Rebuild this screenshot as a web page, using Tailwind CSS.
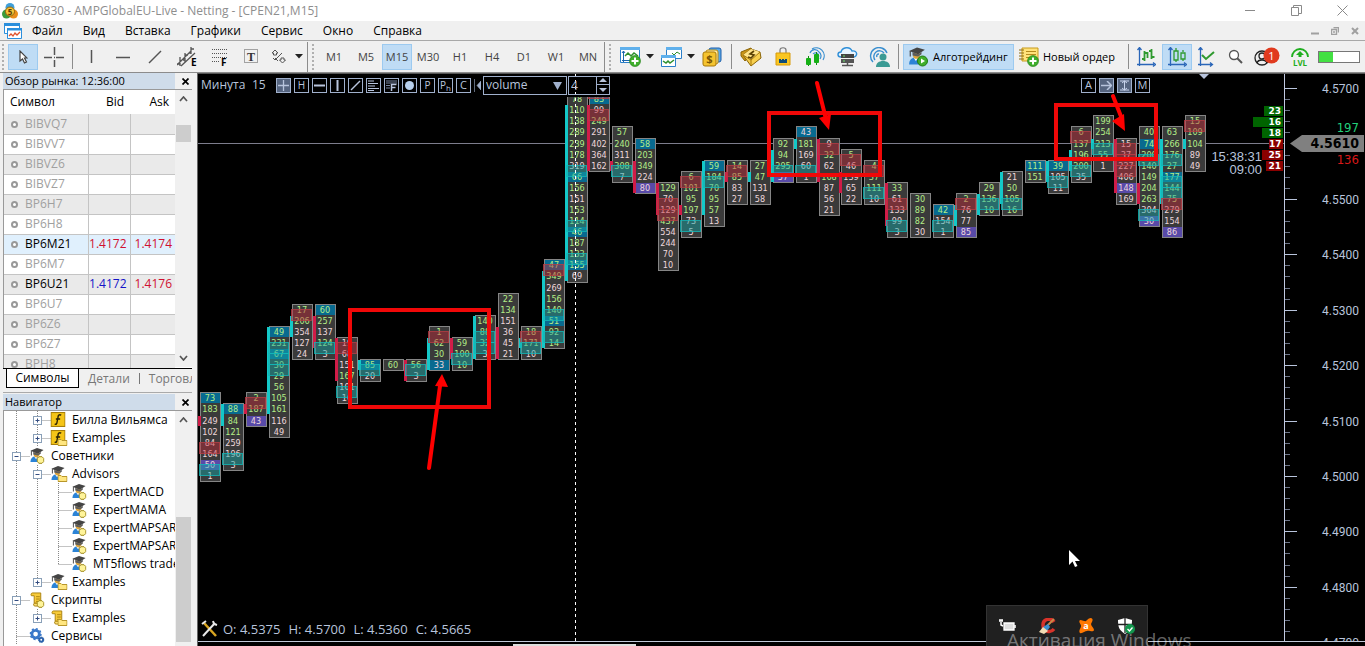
<!DOCTYPE html>
<html lang="ru">
<head>
    <meta charset="UTF-8">
    <meta name="viewport" content="width=device-width, initial-scale=1.0">
    <title>670830 - AMPGlobalEU-Live - Netting - [CPEN21,M15]</title>
    <script src="https://cdn.jsdelivr.net/npm/@tailwindcss/browser@4"></script>
</head>
<body class="h-screen flex flex-col overflow-hidden bg-[#f0f0f0] text-black text-[12px] leading-4 font-['Open_Sans','Noto_Sans',sans-serif]">
    <!-- Shared icons -->
    <svg class="hidden">
        <symbol id="advisor" viewBox="0 0 16 16">
            <path d="M1 15c0-4 2-6 5-6s6 2 6 6z" fill="#2b83d6" />
            <path d="M5 9l2 3 2-3z" fill="#fff" />
            <circle cx="7.500" cy="7" r="3" fill="#d9a23c" />
            <path d="M1 3l7-3 7 2-6 4z" fill="#444" />
            <path d="M4 4v3l5 1 3-2V4L9 6z" fill="#5d5d5d" />
            <path d="M2 3v5" stroke="#444" />
        </symbol>
        <symbol id="folder" viewBox="0 0 10 8">
            <path d="M.5 1.500h3l1 1h5v5h-9z" fill="#ffe680" stroke="#b8962a" />
        </symbol>
        <symbol id="gem" viewBox="0 0 8 8">
            <path d="M2.500 .7h3l1.800 1.800v3L5.500 7.300h-3L.7 5.500v-3z" fill="#fff49a" stroke="#a08a1c" />
        </symbol>
        <symbol id="fx" viewBox="0 0 14 14">
            <rect x=".5" y=".5" width="13" height="13" fill="#f5c518" stroke="#a87f0a" />
            <path d="M10 3c-2-1-3 0-3 2L6 10c0 1-1 2-2 1M5 6.500h4" fill="none" stroke="#2a2205" stroke-width="1.300" />
        </symbol>
        <symbol id="script" viewBox="0 0 16 16">
            <path d="M3 1h9v11H5V4H2c-1-1 0-3 1-3z" fill="#f7cb3a" stroke="#a9800e" />
            <path d="M5 12h9c1 1 0 3-1 3H6c-2 0-2-2-1-3z" fill="#fbdf74" stroke="#a9800e" />
            <path d="M7 5h4M7 7.500h4M7 10h3" stroke="#a9800e" />
        </symbol>
        <symbol id="gears" viewBox="0 0 16 16">
            <circle cx="6.500" cy="6.500" r="4" fill="none" stroke="#3a78c9" stroke-width="3" />
            <circle cx="6.500" cy="6.500" r="5.700" fill="none" stroke="#3a78c9" stroke-width="1.600" stroke-dasharray="2.200 2.200" />
            <circle cx="12.500" cy="12.500" r="2" fill="none" stroke="#2c62ab" stroke-width="2" />
            <circle cx="12.500" cy="12.500" r="3" fill="none" stroke="#2c62ab" stroke-dasharray="1 1" />
        </symbol>
        <symbol id="plus" viewBox="0 0 12 12">
            <circle cx="6" cy="6" r="5.500" fill="#3fae2c" stroke="#1f7c14" stroke-width=".6" />
            <path d="M6 2.500v7M2.500 6h7" stroke="#fff" stroke-width="2" />
        </symbol>
    </svg>

    <!-- Title bar -->
    <header class="flex items-center h-[21px] shrink-0 bg-white text-[#8e8e8e]">
        <svg class="ml-[2px] mr-[5px]" width="16" height="18" viewBox="0 0 16 18">
            <circle cx="8" cy="5.500" r="4.500" fill="#3f9fd8" />
            <circle cx="4.500" cy="12" r="4.500" fill="#3b9b3b" />
            <circle cx="11.500" cy="12" r="4.500" fill="#e98e1c" />
            <circle cx="8" cy="9.500" r="4.500" fill="#f8c63a" stroke="#96650a" />
            <text x="8" y="12.500" text-anchor="middle" font-size="8" font-weight="bold" fill="#5b3b05">5</text>
        </svg>
        <h1>670830 - AMPGlobalEU-Live - Netting - [CPEN21,M15]</h1>
        <div class="ml-auto flex">
            <button aria-label="Свернуть" class="w-[46px] flex justify-center"><svg width="11" height="11"><path d="M0 5.500h10" stroke="#8a8a8a" /></svg></button>
            <button aria-label="Развернуть" class="w-[46px] flex justify-center"><svg width="11" height="11" fill="none" stroke="#8a8a8a"><path d="M.5 2.500h7v8h-7zM2.500 2.500v-2h8v8h-3" /></svg></button>
            <button aria-label="Закрыть" class="w-[46px] flex justify-center"><svg width="11" height="11"><path d="M.5 .5l10 10M10.500 .5l-10 10" stroke="#8a8a8a" /></svg></button>
        </div>
    </header>

    <!-- Menu -->
    <nav class="flex items-center h-5 shrink-0 border-b border-[#a8a8a8]">
        <svg class="ml-1" width="18" height="17" viewBox="0 0 18 17">
            <path d="M.5 1.500h15v10H.5z" fill="#fff" stroke="#2b8fdc" />
            <path d="M0 1h16v3H0z" fill="#2b8fdc" />
            <path d="M3.500 6.500h14v10h-14z" fill="#fff" stroke="#2b8fdc" />
            <path d="M3 6h15v2.500H3z" fill="#2b8fdc" />
            <path d="M5 14l2-2 2 2 2-3 2 2 3-3" fill="none" stroke="#e0522b" stroke-width="1.300" />
        </svg>
        <div class="flex gap-5 ml-[10px]">
            <a href="#">Файл</a>
            <a href="#">Вид</a>
            <a href="#">Вставка</a>
            <a href="#">Графики</a>
            <a href="#">Сервис</a>
            <a href="#">Окно</a>
            <a href="#">Справка</a>
        </div>
        <div class="ml-auto mr-[6px] flex items-center gap-3 text-[#a0a0a0]">
            <svg width="8" height="8"><path d="M0 6.500h8" stroke="currentColor" stroke-width="2" /></svg>
            <svg width="8" height="8" fill="none" stroke="currentColor"><path d="M.5 2.500h5v5h-5zM2.500 .5h5v5M2 5h2" stroke-width="1.400" /></svg>
            <svg width="8" height="8"><path d="M1 1l6 6M7 1L1 7" stroke="currentColor" stroke-width="2" /></svg>
        </div>
    </nav>

    <!-- Toolbar -->
    <div class="flex items-center h-8 shrink-0 border-b border-[#8c8c8c] text-[#444]">
        <span class="w-[3px] h-[26px] ml-[2px] mr-[3px] border-l-2 border-dotted border-[#b0b0b0]"></span>
        <button aria-label="Курсор" class="w-[30px] h-[26px] flex items-center justify-center bg-[#bfdcf5] border border-[#9ccaf0]">
            <svg width="9" height="14" viewBox="0 0 9 14"><path d="M1 1v10l2.500-2 2 4 2-1-2-4H8z" fill="#fff" stroke="#444" stroke-width="1.200" /></svg>
        </button>
        <button aria-label="Перекрестие" class="w-8 flex justify-center"><svg width="20" height="20"><path d="M0 10.500h8M12 10.500h8M10.500 0v8M10.500 13v7M10 10.500h1" stroke="#555" stroke-width="1.500" /></svg></button>
        <span class="w-px h-[25px] mx-[2px] bg-[#8c8c8c]"></span>
        <button aria-label="Вертикальная линия" class="w-8 flex justify-center"><svg width="16" height="16"><path d="M8.500 1v13" stroke="#555" stroke-width="1.500" /></svg></button>
        <button aria-label="Горизонтальная линия" class="w-8 flex justify-center"><svg width="16" height="16"><path d="M1 8.500h14" stroke="#555" stroke-width="1.500" /></svg></button>
        <button aria-label="Трендовая линия" class="w-8 flex justify-center"><svg width="16" height="16"><path d="M2 14L14 2" stroke="#555" stroke-width="1.500" /></svg></button>
        <button aria-label="Каналы" class="w-8 flex justify-center">
            <svg width="21" height="20" viewBox="0 0 21 20"><path d="M0 18L14 4M4 19L18 6M3 10v9M0 17h3M8 6v9M6 13h2M8 8h3M14 0v7M12 6h2M14 2h3" fill="none" stroke="#555" stroke-width="1.300" /><text x="14" y="19" font-size="10" font-weight="bold" fill="#000">E</text></svg>
        </button>
        <button aria-label="Фибоначчи" class="w-8 flex justify-center">
            <svg width="17" height="20" viewBox="0 0 17 20"><path d="M1 2.500h15M1 6.500h15M1 10.500h15M1 14.500h8" stroke="#555" stroke-dasharray="1 1" /><text x="10" y="19" font-size="10" font-weight="bold" fill="#000">F</text></svg>
        </button>
        <button aria-label="Текст" class="w-8 flex justify-center">
            <svg width="15" height="15" viewBox="0 0 15 15"><rect x=".5" y=".5" width="13" height="13" fill="none" stroke="#555" stroke-dasharray="1 1" /><text x="7" y="12" text-anchor="middle" font-size="12" font-weight="bold" font-family="Liberation Serif, serif" fill="#333">T</text></svg>
        </button>
        <button aria-label="Объекты" class="w-10 flex items-center justify-center gap-[9px]">
            <svg width="15" height="15" viewBox="0 0 15 15" fill="none" stroke="#555"><path d="M4 1l3 3h-1.500v2h-3v-2H1zM4 9l3 3M2 9l2 2 7-7M11.500 14l-3-3h1.500v-2h3v2h1.500z" /></svg>
            <svg width="8" height="5"><path d="M0 0h8L4 4.500z" fill="#222" /></svg>
        </button>
        <span class="w-px h-[30px] mr-1 bg-[#8c8c8c]"></span>
        <span class="w-[3px] h-[26px] mr-[3px] border-l-2 border-dotted border-[#b0b0b0]"></span>
        <div class="flex text-[11px]">
            <button class="w-8 h-[26px]">M1</button>
            <button class="w-8 h-[26px]">M5</button>
            <button class="w-[30px] h-[26px] bg-[#bfdcf5] border border-[#9ccaf0]">M15</button>
            <button class="w-8 h-[26px]">M30</button>
            <button class="w-8 h-[26px]">H1</button>
            <button class="w-8 h-[26px]">H4</button>
            <button class="w-8 h-[26px]">D1</button>
            <button class="w-8 h-[26px]">W1</button>
            <button class="w-8 h-[26px]">MN</button>
        </div>
        <span class="w-px h-[30px] mr-1 bg-[#8c8c8c]"></span>
        <span class="w-[3px] h-[26px] mr-2 border-l-2 border-dotted border-[#b0b0b0]"></span>
        <button aria-label="Новый график" class="w-[38px] flex items-center gap-[5px]">
            <svg width="21" height="20" viewBox="0 0 21 20"><path d="M.5 .5h19v15H.5z" fill="#fff" stroke="#2b7fc9" /><path d="M0 0h20v3H0z" fill="#5fb0ec" /><path d="M3.500 4v11M2 13.500h16M2 6l1.500-2L5 6" fill="none" stroke="#1b66ad" /><path d="M5 9l3-3 3 3 3-3 4 3" fill="none" stroke="#2d8f2d" stroke-width="1.500" /><use href="#plus" x="9" y="8" width="12" height="12" /></svg>
            <svg width="8" height="5"><path d="M0 0h8L4 4.500z" fill="#222" /></svg>
        </button>
        <button aria-label="Профили" class="w-[41px] ml-[3px] flex items-center gap-[5px]">
            <svg width="21" height="20" viewBox="0 0 21 20"><path d="M5.500 .5h15v11h-15z" fill="#fff" stroke="#2b7fc9" /><path d="M5 0h16v3H5z" fill="#5fb0ec" /><path d="M11 6l2 2 3-3 3 2" fill="none" stroke="#2d8f2d" /><path d="M.5 8.500h14v11H.5z" fill="#fff" stroke="#2b7fc9" /><path d="M0 8h15v3H0z" fill="#5fb0ec" /><path d="M2 14l3 2 2-2 2 2 4-3" fill="none" stroke="#2d8f2d" stroke-width="1.500" /></svg>
            <svg width="8" height="5"><path d="M0 0h8L4 4.500z" fill="#222" /></svg>
        </button>
        <button aria-label="Обзор рынка" class="w-[24px]">
            <svg width="20" height="20" viewBox="0 0 20 20"><rect x="7" y="1" width="12" height="14" rx="2" fill="#5aa9ea" stroke="#1f5fa8" /><rect x="4" y="3" width="12" height="14" rx="2" fill="#ffe89a" stroke="#b98a11" /><rect x="1" y="5" width="13" height="14" rx="2" fill="#f5c430" stroke="#a87808" /><text x="7.500" y="16" text-anchor="middle" font-size="11" font-weight="bold" fill="#7a5605">$</text></svg>
        </button>
        <span class="w-px h-[25px] ml-[5px] mr-[3px] bg-[#8c8c8c]"></span>
        <button aria-label="Сигналы" class="w-8 flex justify-center">
            <svg width="22" height="20" viewBox="0 0 22 20"><path d="M1 5l10-4 2 4-8 9-4-5z" fill="#c99416" stroke="#8a6408" /><path d="M3 8l8-6 9 3 1 6-10 8z" fill="#f7cf4e" stroke="#8a6408" /><path d="M11 2l9 3-9 8-8-5z" fill="#ffe48a" /><path d="M14 4l-4 3 4 1-3 3-3-1" fill="none" stroke="#5b4104" stroke-width="1.600" /><path d="M3 8l8 5v6M11 13l9-8" fill="none" stroke="#a87808" /></svg>
        </button>
        <button aria-label="Маркет" class="w-8 flex justify-center">
            <svg width="16" height="19" viewBox="0 0 16 19"><path d="M5 7V3c0-3 6-3 6 0v4" fill="none" stroke="#777" stroke-width="1.200" /><path d="M1 6h14v12H1z" fill="#f9c622" stroke="#d79a08" /><path d="M4 16v-4h2v1h1v-1h2v1h1v-1h2v4z" fill="#0c4b7a" /></svg>
        </button>
        <button aria-label="Торговые сигналы" class="w-8 flex justify-center">
            <svg width="21" height="20" viewBox="0 0 21 20"><path d="M5 6a5 5 0 0 1 9-1 5 5 0 0 1 1 7M8 7a3 3 0 0 1 5 4M7 2a8 8 0 0 1 11 11" fill="none" stroke="#3a8fd0" stroke-width="1.200" /><path d="M3.500 9v10M11.500 5v13" stroke="#128a12" /><rect x="1" y="11" width="5" height="7" rx="1" fill="#15b015" /><rect x="9" y="7" width="5" height="9" rx="1" fill="#15b015" /></svg>
        </button>
        <button aria-label="VPS" class="w-8 flex justify-center">
            <svg width="21" height="20" viewBox="0 0 21 20"><path d="M4 10c-4 0-4-5 0-5 1-5 9-6 11-1 6-1 6 6 1 6z" fill="#e8f4ff" stroke="#2f8fd8" stroke-width="1.400" /><rect x="4" y="7" width="13" height="4" fill="#444" /><rect x="4" y="12" width="13" height="4" fill="#555" /><path d="M6 9h2M6 14h2" stroke="#6fe06f" /><path d="M10.500 16v3M5 18.500h11" stroke="#555" stroke-width="1.500" /></svg>
        </button>
        <button aria-label="Чат" class="w-8 flex justify-center">
            <svg width="21" height="20" viewBox="0 0 21 20"><path d="M6 13a5 5 0 1 1 9-7M4 15a8.500 8.500 0 1 1 14-9M8 10a2 2 0 0 1 2-3" fill="none" stroke="#3a8fd0" stroke-width="1.400" /><circle cx="14" cy="10" r="3.500" fill="#3b9a94" /><path d="M7 20c0-4 3-6 7-6s7 2 7 6z" fill="#3b9a94" /></svg>
        </button>
        <span class="w-px h-[25px] ml-[3px] mr-[4px] bg-[#8c8c8c]"></span>
        <button class="h-[26px] w-[111px] shrink-0 flex items-center gap-[5px] px-1 bg-[#bfdcf5] border border-[#9ccaf0] text-black text-[11px] whitespace-nowrap">
            <svg class="shrink-0" width="20" height="20" viewBox="0 0 20 20"><use href="#advisor" width="18" height="19" /><circle cx="14.500" cy="14" r="5" fill="#3fae2c" stroke="#1f7c14" /><path d="M13 11.500l4 2.500-4 2.500z" fill="#fff" /></svg>
            Алготрейдинг
        </button>
        <button class="h-[26px] w-[111px] shrink-0 flex items-center gap-1 px-[5px] text-black text-[11px] whitespace-nowrap">
            <svg class="shrink-0" width="20" height="20" viewBox="0 0 20 20"><path d="M3 1h16v13H3z" fill="#ffe27a" stroke="#c79a1b" /><path d="M0 3h5M0 6h5M0 9h5M0 12h5" stroke="#8c6a10" /><path d="M7 4.500h10M7 7.500h10M7 10.500h6" stroke="#b58a1c" /><use href="#plus" x="8" y="8" width="12" height="12" /></svg>
            Новый ордер
        </button>
        <span class="w-px h-[25px] ml-[3px] mr-px bg-[#8c8c8c]"></span>
        <button aria-label="Бары" class="w-8 flex justify-center"><svg width="20" height="20" viewBox="0 0 20 20" fill="none"><path d="M3.500 1v18M1 17.500h17M1.500 3l2-2.500 2 2.500M17 15.500l2.500 2-2.500 2" stroke="#2a66b8" stroke-width="1.300" /><path d="M8.500 4v10M6 12h2.500M8.500 6h3v5M15.500 2v10M13 4h2.500M15.500 10h3" stroke="#2f9a2f" stroke-width="1.800" /></svg></button>
        <button aria-label="Свечи" class="w-[30px] h-[26px] flex items-center justify-center bg-[#bfdcf5] border border-[#9ccaf0]"><svg width="20" height="20" viewBox="0 0 20 20" fill="none"><path d="M3.500 1v18M1 17.500h17M1.500 3l2-2.500 2 2.500M17 15.500l2.500 2-2.500 2" stroke="#2a66b8" stroke-width="1.300" /><path d="M9 1v3M9 13v2M7 4h4v9H7zM16 3v2M16 12v2M14 6h4v6h-4z" stroke="#2f9a2f" stroke-width="1.300" /></svg></button>
        <button aria-label="Линия" class="w-[30px] flex justify-center"><svg width="20" height="20" viewBox="0 0 20 20" fill="none"><path d="M3.500 1v18M1 17.500h14M1.500 3l2-2.500 2 2.500M13 15.500l2.500 2-2.500 2" stroke="#2a66b8" stroke-width="1.300" /><path d="M5 8l4 4 8-7" stroke="#2f9a2f" stroke-width="2" /></svg></button>
        <button aria-label="Поиск" class="w-[26px] flex justify-center"><svg width="15" height="15" viewBox="0 0 15 15"><circle cx="6" cy="6" r="4.500" fill="#fff" stroke="#555" stroke-width="1.300" /><path d="M9 9l5 5" stroke="#555" stroke-width="2" /></svg></button>
        <button aria-label="Профиль" class="w-[38px] flex justify-center"><svg width="26" height="20" viewBox="0 0 26 20"><circle cx="8" cy="11" r="7" fill="none" stroke="#222" stroke-width="1.300" /><circle cx="8" cy="9" r="3" fill="none" stroke="#222" stroke-width="1.300" /><path d="M3 16c1-4 9-4 10 0" fill="none" stroke="#222" stroke-width="1.300" /><circle cx="17.500" cy="8.500" r="8" fill="#e03a1e" /><text x="17.500" y="12.500" text-anchor="middle" font-size="11" fill="#fff">1</text></svg></button>
        <button aria-label="Уровень" class="w-[28px] flex justify-center"><svg width="20" height="20" viewBox="0 0 20 20"><path d="M2 10a8 8 0 1 1 16 0" fill="none" stroke="#1fae1f" stroke-width="1.800" /><path d="M10 4l4 4h-2.500v2h-3V8H6z" fill="#1fae1f" /><text x="10" y="19" text-anchor="middle" font-size="8" font-weight="bold" fill="#1fae1f">LVL</text></svg></button>
        <span class="w-[42px] h-3 ml-1 border border-[#777] bg-white"><span class="block w-[14px] h-full bg-[#43e043]"></span></span>
    </div>

    <main class="flex-1 min-h-0 flex">
        <!-- Side panels -->
        <aside class="w-[198px] shrink-0 flex flex-col pl-[3px] pr-[5px] border-r border-[#666]">
            <section class="flex flex-col shrink-0">
                <div class="flex items-center justify-between h-4 text-[11px]">
                    <h2 class="flex-1 pl-[2px] bg-[#cfdcea]">Обзор рынка: 12:36:00</h2>
                    <button aria-label="Закрыть" class="px-[3px] ml-1"><svg width="7" height="7"><path d="M.5 .5l6 6M6.500 .5l-6 6" stroke="#000" stroke-width="1.700" /></svg></button>
                </div>
                <div class="h-[279px] flex overflow-hidden border-t border-l border-[#999] bg-white">
                    <div class="flex-1 overflow-hidden">
                        <table class="w-full table-fixed">
                            <thead>
                                <tr class="h-6">
                                    <th class="w-[84px] pl-[6px] text-left font-normal">Символ</th>
                                    <th class="w-[42px] pr-[6px] text-right font-normal">Bid</th>
                                    <th class="pr-[6px] text-right font-normal">Ask</th>
                                </tr>
                            </thead>
                            <tbody id="quotes"></tbody>
                        </table>
                    </div>
                    <div class="w-[17px] h-[277px] flex flex-col items-center bg-[#f0f0f0] py-[6px]">
                        <svg width="9" height="6" fill="none" stroke="#555" stroke-width="1.700"><path d="M1 5l3.500-4L8 5" /></svg>
                        <div class="w-[15px] h-[17px] mt-[23px] bg-[#cdcdcd]"></div>
                        <svg class="mt-auto" width="9" height="6" fill="none" stroke="#555" stroke-width="1.700"><path d="M1 1l3.500 4L8 1" /></svg>
                    </div>
                </div>
                <div class="flex h-5 overflow-hidden border-t border-black text-[#777] whitespace-nowrap">
                    <button class="w-[73px] shrink-0 ml-[3px] bg-white text-black border-x border-b border-black">Символы</button>
                    <button class="px-[9px] shrink-0">Детали</button>
                    <button class="pl-[9px] my-1 leading-3 border-l border-[#777]">Торговля</button>
                </div>
            </section>
            <section class="flex-1 min-h-0 flex flex-col mt-1 pt-px border-t border-[#aaa]">
                <div class="flex items-center justify-between h-4 text-[11px]">
                    <h2 class="flex-1 pl-[2px] bg-[#cfdcea]">Навигатор</h2>
                    <button aria-label="Закрыть" class="px-[3px] ml-1"><svg width="7" height="7"><path d="M.5 .5l6 6M6.500 .5l-6 6" stroke="#000" stroke-width="1.700" /></svg></button>
                </div>
                <div class="flex-1 min-h-0 flex border-t border-l border-[#999] bg-white">
                    <ul id="tree" class="flex-1 min-w-0 overflow-hidden"></ul>
                    <div class="w-[17px] flex flex-col items-center bg-[#f0f0f0] pt-[6px]">
                        <svg width="9" height="6" fill="none" stroke="#555" stroke-width="1.700"><path d="M1 5l3.500-4L8 5" /></svg>
                        <div class="w-[15px] h-[125px] mt-[94px] bg-[#cdcdcd]"></div>
                    </div>
                </div>
            </section>
        </aside>

        <!-- Chart -->
        <section class="flex-1 min-w-0 relative flex flex-col border-t border-[#555] bg-black text-[#b8c4dc]">
            <div class="flex-1 min-h-0 flex border-b border-[#c0c8d8]">
                <div class="flex-1 min-w-0 relative border-r border-[#c0c8e0]">
                    <svg class="absolute inset-0 w-full h-full" font-family="DejaVu Sans Condensed, Noto Sans, sans-serif">
                        <defs><clipPath id="below"><rect y="23" width="100%" height="100%" /></clipPath></defs>
                        <path d="M0 69.500h3000" stroke="#7d7d8c" />
                        <path d="M1001 0h10l-5 5z" fill="#b8c4dc" />
                        <g id="clusters" font-size="9" text-anchor="middle" clip-path="url(#below)"></g>
                        <path d="M377.500 0v567" stroke="#fff" stroke-dasharray="3 3" />
                        <g fill="none" stroke="#f00808" stroke-width="4">
                            <path d="M152 236h139v97H152zM571 39h111v62H571zM858 31h100v54H858z" />
                            <path d="M231 394l11-82M619 9l9 36M915 22l9 23" stroke="#f00" stroke-linecap="round" />
                        </g>
                        <path d="M244 300l6 13-13-1zM631 56l-10-12 12-4zM927 57l-13-10 12-7z" fill="#f00" />
                    </svg>
                    <div class="relative h-[22px] flex items-center gap-[3px] pl-[3px] pr-[134px] text-[12px]">
                        <span class="w-[48px]">Минута</span>
                        <span class="w-[21px]">15</span>
                        <button class="size-[15px] grid place-items-center border border-[#a0b0cc] bg-[#566580]" aria-label="Крест"><svg width="11" height="11"><path d="M5.500 0v11M0 5.500h11" stroke="#b8c4dc" stroke-width="1.300" /></svg></button>
                        <button class="size-[15px] grid place-items-center border border-[#a0b0cc] text-[10px] leading-3">H</button>
                        <button class="size-[15px] grid place-items-center border border-[#a0b0cc]" aria-label="Горизонталь"><svg width="11" height="11"><path d="M0 5.500h11" stroke="#b8c4dc" stroke-width="2" /></svg></button>
                        <button class="size-[15px] grid place-items-center border border-[#a0b0cc]" aria-label="Вертикаль"><svg width="11" height="11"><path d="M5.500 0v11" stroke="#b8c4dc" stroke-width="2" /></svg></button>
                        <button class="size-[15px] grid place-items-center border border-[#a0b0cc]" aria-label="Луч"><svg width="11" height="11"><path d="M1 10l9-9" stroke="#b8c4dc" stroke-width="1.500" /></svg></button>
                        <button class="size-[15px] grid place-items-center border border-[#a0b0cc]" aria-label="Профиль"><svg width="11" height="11"><path d="M0 1h6M0 3.500h10M0 6h7M0 8.500h11M0 10.500h6" stroke="#b8c4dc" stroke-width="1.200" /></svg></button>
                        <button class="size-[15px] grid place-items-center border border-[#a0b0cc]" aria-label="Фибо"><svg width="11" height="11" stroke="#b8c4dc"><path d="M0 1h11M0 3h11M0 5.500h4M0 8h4" stroke="#7684a0" /><path d="M5.500 11V4.500h5M5.500 7.500h4" fill="none" stroke-width="1.500" /></svg></button>
                        <button class="size-[15px] grid place-items-center border border-[#a0b0cc]" aria-label="Круг"><svg width="9" height="9"><circle cx="4.500" cy="4.500" r="4.500" fill="#b8d0ec" /></svg></button>
                        <button class="size-[15px] grid place-items-center border border-[#a0b0cc] text-[10px] leading-3">P</button>
                        <button class="size-[15px] grid place-items-center border border-[#a0b0cc] text-[10px] leading-3"><span>P<sub class="text-[8px]">h</sub></span></button>
                        <button class="size-[15px] grid place-items-center border border-[#a0b0cc] text-[11px] leading-3">C</button>
                        <svg width="7" height="13"><path d="M.5 0v13M7 2v9L3 6.500z" fill="#a0b0cc" stroke="#a0b0cc" stroke-width=".6" /></svg>
                        <div class="flex gap-px -ml-px">
                            <label class="relative w-[84px] h-[19px] border border-[#a0b0cc]">
                                <select aria-label="Тип" class="appearance-none w-full h-[17px] block pl-[2px] text-[12px] leading-4 bg-black"><option>volume</option></select>
                                <svg class="absolute right-1 top-[5px]" width="9" height="8"><path d="M0 0h9L4.500 8z" fill="#a0b0cc" /></svg>
                            </label>
                            <div class="w-[42px] h-[19px] flex border border-[#a0b0cc]">
                                <input aria-label="Шаг" type="text" value="4" class="w-[27px] h-[17px] pl-[2px]">
                                <div class="flex-1 flex flex-col items-center justify-around border-l border-[#a0b0cc]">
                                    <svg width="8" height="4"><path d="M0 4h8L4 0z" fill="#b8c4dc" /></svg>
                                    <span class="w-full h-px bg-[#a0b0cc]"></span>
                                    <svg width="8" height="4"><path d="M0 0h8L4 4z" fill="#b8c4dc" /></svg>
                                </div>
                            </div>
                        </div>
                        <button class="ml-auto size-[15px] grid place-items-center border border-[#a0b0cc] text-[11px] leading-3">A</button>
                        <button class="size-[15px] grid place-items-center border border-[#a0b0cc] bg-[#566580]" aria-label="Сдвиг"><svg width="11" height="9"><path d="M0 4.500h10M6 0l4.500 4.500L6 9" fill="none" stroke="#b8c4dc" stroke-width="1.500" /></svg></button>
                        <button class="size-[15px] grid place-items-center border border-[#a0b0cc] bg-[#566580]" aria-label="Масштаб"><svg width="9" height="11"><path d="M0 1h9M0 10h9M4.500 1v9M2 3l2.500-2L7 3M2 8l2.500 2L7 8" fill="none" stroke="#c8d4ec" /></svg></button>
                        <button class="size-[15px] grid place-items-center border border-[#a0b0cc] text-[11px] leading-3">M</button>
                    </div>

                    <!-- Delta by level -->
                    <div id="delta" class="absolute right-px top-[32px] flex flex-col items-end gap-px text-[9px] leading-[10px] font-bold text-white font-['DejaVu_Sans',sans-serif]"></div>
                    <div class="absolute right-[22px] top-[76px] text-right text-[13px] leading-[13px] font-['Liberation_Sans',sans-serif]">15:38:31<br>09:00</div>

                    <div class="absolute left-[3px] bottom-[3px] flex items-center gap-[5px] text-[13px]">
                        <svg width="17" height="18" viewBox="0 0 17 18"><path d="M3 3l12 13" stroke="#d9a521" stroke-width="2.500" /><path d="M14 3L2 16" stroke="#e8e8e8" stroke-width="2" /><path d="M1 4l4-3M12 1l1 3 3 1" fill="none" stroke="#e8e8e8" stroke-width="2" /></svg>
                        <p class="flex gap-2"><span>O: 4.5375</span><span>H: 4.5700</span><span>L: 4.5360</span><span>C: 4.5665</span></p>
                    </div>
                </div>

                <!-- Price scale -->
                <div class="w-20 shrink-0 relative overflow-hidden">
                    <svg id="scale" class="absolute inset-0 w-full h-full" font-family="Roboto, sans-serif" font-size="12" text-anchor="end" fill="#b8c4dc"></svg>
                </div>
            </div>
            <div class="h-1 shrink-0"><div class="w-[123px] h-[2px] ml-[315px] mt-[2px] bg-[#ddd]"></div></div>

            <!-- Mouse pointer -->
            <svg class="absolute right-[285px] bottom-[78px]" width="11" height="18" viewBox="0 0 11 18"><path d="M0 0v15l3.500-3.500L6 17l2.500-1-2.500-5h5z" fill="#fff" /></svg>

            <!-- Tray popup -->
            <div class="absolute right-[217px] bottom-0 w-[162px] h-[41px] flex justify-between px-3 pt-[12px] bg-[#202020] border border-b-0 border-[#333]">
                <svg width="17" height="16" viewBox="0 0 17 16"><path d="M5 5h10v7H5z" fill="#ddd" stroke="#fff" stroke-width="1.300" /><path d="M16 7v3M0 3h4M1 1v2M3 1v2M2 4v3l2 1" fill="none" stroke="#fff" stroke-width="1.500" /></svg>
                <svg width="17" height="16" viewBox="0 0 17 16"><path d="M15 4C12-1 4 1 4 7s7 9 11 4" fill="none" stroke="#d8332a" stroke-width="3.500" /><path d="M15 1L8 8" stroke="#c98a4a" stroke-width="2" /><path d="M9 6L4 9l4 4 3-4z" fill="#3b8fd0" /><path d="M4 9l-4 5 5 2 4-3z" fill="#f1ddb5" /></svg>
                <svg width="17" height="16" viewBox="0 0 17 16"><path d="M2 2c3 0 5 2 6 1 2-2 3-3 5-3 3 1 1 4 0 6 0 2 3 4 3 6-1 3-5 0-7 1-2 0-5 3-7 2-2-2 1-5 1-7S0 4 2 2z" fill="#ff7800" /><text x="8" y="11" text-anchor="middle" font-size="9" font-weight="bold" fill="#fff">a</text></svg>
                <svg width="17" height="16" viewBox="0 0 17 16"><path d="M7 0l7 2c0 7-1 10-7 14C1 12 0 9 0 2z" fill="#fff" /><path d="M7 0v15M0 6.500h14" stroke="#202020" stroke-width="1.300" /><circle cx="12" cy="11" r="5" fill="#12954c" /><path d="M9.500 11l2 2 3-3.500" fill="none" stroke="#fff" stroke-width="1.300" /></svg>
            </div>
            <div class="absolute right-0 bottom-0 w-[358px] h-4 overflow-hidden text-[19px] leading-5 text-white/40 whitespace-nowrap">Активация Windows</div>
        </section>
    </main>

    <script>
        // symbol, bid, ask, bid colour
        const quotes = [
            ['BIBVQ7'], ['BIBVV7'], ['BIBVZ6'], ['BIBVZ7'], ['BP6H7'], ['BP6H8'],
            ['BP6M21', '1.4172', '1.4174', 'text-[#d01030]'], ['BP6M7'],
            ['BP6U21', '1.4172', '1.4176', 'text-[#1414c8]'], ['BP6U7'], ['BP6Z6'], ['BP6Z7'], ['BPH8']
        ];

        document.getElementById('quotes').innerHTML = quotes.map(([name, bid = '', ask = '', color = ''], i) => {
            const bg = name === 'BP6M21' ? 'bg-[#e0f0fd]' : i % 2 ? 'bg-white' : 'bg-[#eaeaea]';
            return `
                <tr class="h-5 border-b border-[#c4c4c4] ${bg}">
                    <td class="pl-[7px] border-r border-[#c4c4c4] ${bid ? 'text-black' : 'text-[#a0a0a0]'}"><span class="inline-block size-[7px] mr-[7px] rounded-full border-2 border-[#999] bg-white"></span>${name}</td>
                    <td class="pr-[3px] text-right border-r border-[#c4c4c4] ${color}">${bid}</td>
                    <td class="pr-[3px] text-right text-[#d01030]">${ask}</td>
                </tr>`;
        }).join('');

        // label, depth, icon, badge, expander
        const tree = [
            ['Билла Вильямса', 1, 'fx', '', '+'], ['Examples', 1, 'fx', 'folder', '+'],
            ['Советники', 0, 'advisor', 'gem', '-'], ['Advisors', 1, 'advisor', 'folder', '-'],
            ['ExpertMACD', 2, 'advisor', 'gem', ''], ['ExpertMAMA', 2, 'advisor', 'gem', ''],
            ['ExpertMAPSAR', 2, 'advisor', 'gem', ''], ['ExpertMAPSARSizeOptimized', 2, 'advisor', 'gem', ''],
            ['MT5flows trade', 2, 'advisor', 'gem', ''], ['Examples', 1, 'advisor', 'folder', '+'],
            ['Скрипты', 0, 'script', 'gem', '-'], ['Examples', 1, 'script', 'folder', '+'], ['Сервисы', 0, 'gears', '', '']
        ];

        document.getElementById('tree').innerHTML = tree.map(([label, depth, icon, badge, box], i) => {
            const x = 12.5 + depth * 21;
            let d = `M12.5 0v18M${x} 9.500h13`;
            if (i < 11 && depth > 0) d += i === 9 ? 'M33.500 0v9' : 'M33.500 0v18';
            if (i === 11) d += 'M33.500 0v9';
            if (depth === 2) d += i === 8 ? 'M54.500 0v9' : 'M54.500 0v18';
            const expander = box ? `<rect x="${x - 4}" y="5.500" width="8" height="8" fill="#fff" stroke="#8aa0b8" /><path d="M${x - 2} 9.500h4${box === '+' ? `M${x} 7.500v4` : ''}" stroke="#334c80" />` : '';
            const badgeSize = badge === 'folder' ? 'width="10" height="8"' : 'width="8" height="8"';
            return `
                <li class="flex items-center h-[18px] whitespace-nowrap">
                    <svg class="shrink-0" width="${43 + depth * 21}" height="18">
                        <path d="${d}" stroke="#888" stroke-dasharray="1 1" fill="none" />${expander}
                        <use href="#${icon}" x="${x + 13}" y="1" width="15" height="15" />
                        ${badge ? `<use href="#${badge}" x="${x + 20}" y="9" ${badgeSize} />` : ''}
                    </svg>
                    <span class="pl-1">${label}</span>
                </li>`;
        }).join('');

        // Cluster columns: first row, cells, boxes, side bar.
        // Cell suffix: g = green text, b = blue fill, p = purple fill. Box: t/r + row. Bar: c/r, from, to.
        const columns = [
            [23, '73gb 183g 249 102 84 164 50p 1', 'r27 t29', 'r 25 25'],
            [24, '88gb 84g 121g 259 196 3', 't28', 'c 24 25'],
            [23, '2g 187g 43p', 'r23', 'r 24 24'],
            [17, '49gb 231g 67gb 30g 29g 56g 105g 161g 116 49', 't18 t19 t20', 'c 17 24'],
            [15, '17g 206g 354 127 24', 'r15', 'c 16 17'],
            [15, '60gb 257g 137 124g 3', 't18', 'r 16 18'],
            [18, '19 68 151 167g 101 16', 'r18 t22', 'r 18 21'],
            [20, '85gb 20', 't20', 'c 20 20'],
            [20, '60g', '', ''],
            [20, '56g 3', 't20', 'r 20 21'],
            [17, '1g 62g 30g 33b', 'r17', 'c 18 20'],
            [18, '59g 100g 10g', 't19', 'r 18 19'],
            [16, '140g 88g 32g 3', 't17 t18', 'c 16 19'],
            [14, '22g 134g 151 36 45 21', '', 'r 17 19'],
            [17, '18g 171g 10', 'r17 t18', 'c 18 18'],
            [11, '47gb 349g 269 156g 140g 51gb 92g 14g', 'r11 t15 t17', 'c 12 18'],
            [-4, '78g 110g 138g 289g 239g 178g 319 66gb 156g 151 153g 114g 46gb 187g 133g 155gb 69', 't2 t7 t10', 'c -3 12'],
            [-4, '83gb 99 249g 291 402 364 162', 'r-5 r-3', 'r -3 2'],
            [-1, '57g 240g 311 308g 7', 't2', 'r 2 2'],
            [0, '58gb 203g 349g 224 80p', '', 'r 2 4'],
            [4, '129g 70 129 437g 554 244 70 10', 'r5 r6', 'r 4 6'],
            [3, '6g 101g 95g 197g 73 5', 'r3 t7', 'r 6 6'],
            [2, '59gb 184g 70g 95g 57g 13', 't3', 'c 2 6'],
            [2, '14g 85g 83 27', 'r2', 'r 3 3'],
            [2, '27g 47g 131 58', '', 'c 3 3'],
            [0, '92g 94g 295g 57p', 't2', 'c 1 3'],
            [-1, '43b 181g 169 60 1', 't2', 'c 0 0'],
            [0, '9 32g 62 168g 87 56 21', 'r0', 'r 0 3'],
            [1, '5g 46 139 65 22', 'r1', 'r 3 4'],
            [2, '4g 37g 111g 10', 'r2 t4', ''],
            [4, '33g 61 133 99 3', 'r5 t7', 'r 4 7'],
            [5, '30g 89g 82g 30', '', ''],
            [6, '42gb 154 1', 't7', ''],
            [5, '2g 76 77 85p', 'r5', 'c 6 7'],
            [4, '29g 136g 10g', 't5', 'c 5 6'],
            [3, '21 50g 105g 16g', 't5', 'c 3 5'],
            [2, '111gb 151g', '', ''],
            [2, '39gb 105 11', 't3', 'c 2 3'],
            [-1, '6g 137g 196g 200g 35', 'r-1 t2', 'c 1 2'],
            [-2, '199g 254g 213g 55g 1', 't0', 'c 0 0'],
            [0, '15 37 227 406 148p 169', 'r0 r1 r2', 'r 0 4'],
            [-1, '40g 74gb 200g 140g 149g 204g 263g 304 30p', 't1 t6', 'r 4 5'],
            [-1, '63g 266g 176g 27g 177gb 144g 75g 279 154 86p', 't1 t3 t4 r5', 'c 0 5'],
            [-2, '15g 109g 104g 89 49', 'r-2', 'c 0 0']
        ];

        const rowH = 11.08;
        const rowY = r => Math.round(69.5 + r * rowH);

        document.getElementById('clusters').innerHTML = columns.map(([start, cells, boxes, bar], i) => {
            const x = Math.round(2 + i * 22.91);
            const list = cells.split(' ');
            const top = rowY(start) - 6;
            let out = `<rect x="${x + 0.5}" y="${top + 0.5}" width="20" height="${rowY(start + list.length) - 6 - top}" fill="#3a3a3a" stroke="#858585" />`;
            list.forEach((cell, k) => {
                const y = rowY(start + k);
                const fill = cell.includes('b') ? '#086a90' : cell.includes('p') ? '#584aa8' : '';
                if (fill) out += `<rect x="${x + 1}" y="${y - 5}" width="19" height="10" fill="${fill}" />`;
                out += `<text x="${x + 10}" y="${y + 3}" fill="${cell.includes('g') ? '#b4ee88' : '#eed8dc'}">${parseInt(cell)}</text>`;
            });
            if (bar) {
                const [color, from, to] = bar.split(' ');
                out += `<rect x="${x - 2}" y="${rowY(+from) - 5}" width="3" height="${rowY(+to) - rowY(+from) + 10}" fill="${color === 'c' ? '#14c8c8' : '#d01c48'}" />`;
            }
            boxes.split(' ').filter(Boolean).forEach(box => {
                const r = parseInt(box.slice(1));
                const teal = box[0] === 't';
                out += `<rect x="${x - 0.5}" y="${rowY(r) - 0.5}" width="20" height="11" fill="${teal ? '#14a8a8' : '#c02838'}" fill-opacity="0.45" stroke="${teal ? '#12b8b8' : '#b83c44'}" stroke-opacity="0.8" />`;
            });
            return out;
        }).join('');

        // value, bar width, colour
        const delta = [
            [23, 19, 'bg-[#006400]'], [16, 30, 'bg-[#006400]'], [18, 21, 'bg-[#006400]'],
            [17, 14, 'bg-[#8b0000]'], [25, 21, 'bg-[#8b0000]'], [21, 17, 'bg-[#8b0000]']
        ];
        document.getElementById('delta').innerHTML = delta.map(([value, width, color]) =>
            `<span class="block h-[10px] pr-[2px] text-right ${color}" style="width: ${width}px">${value}</span>`).join('');

        // Price scale: a tick per row, a label on every fifth one
        let scale = '';
        for (let r = -5; r <= 45; r++) {
            const y = rowY(r) + 0.5;
            const major = r % 5 === 0;
            if (r !== 0) scale += `<path d="M0 ${y}h${major ? 12 : 5}" stroke="${major ? '#b8c4dc' : '#6c7488'}" />`;
            if (major && r !== 0) scale += `<text x="74" y="${y + 4}">${(4.56 - r * 0.002).toFixed(4)}</text>`;
        }
        scale += `
            <path d="M5 69.500l12-8.500h62v17H17z" fill="#808080" />
            <text x="74" y="74" font-size="14" font-weight="bold" fill="#000" font-family="DejaVu Sans Condensed, sans-serif">4.5610</text>
            <text x="74" y="58" font-size="13" fill="#22d07a" font-family="DejaVu Sans Condensed, sans-serif">197</text>
            <text x="74" y="90" font-size="13" fill="#d81818" font-family="DejaVu Sans Condensed, sans-serif">136</text>`;
        document.getElementById('scale').innerHTML = scale;
    </script>
</body>
</html>
